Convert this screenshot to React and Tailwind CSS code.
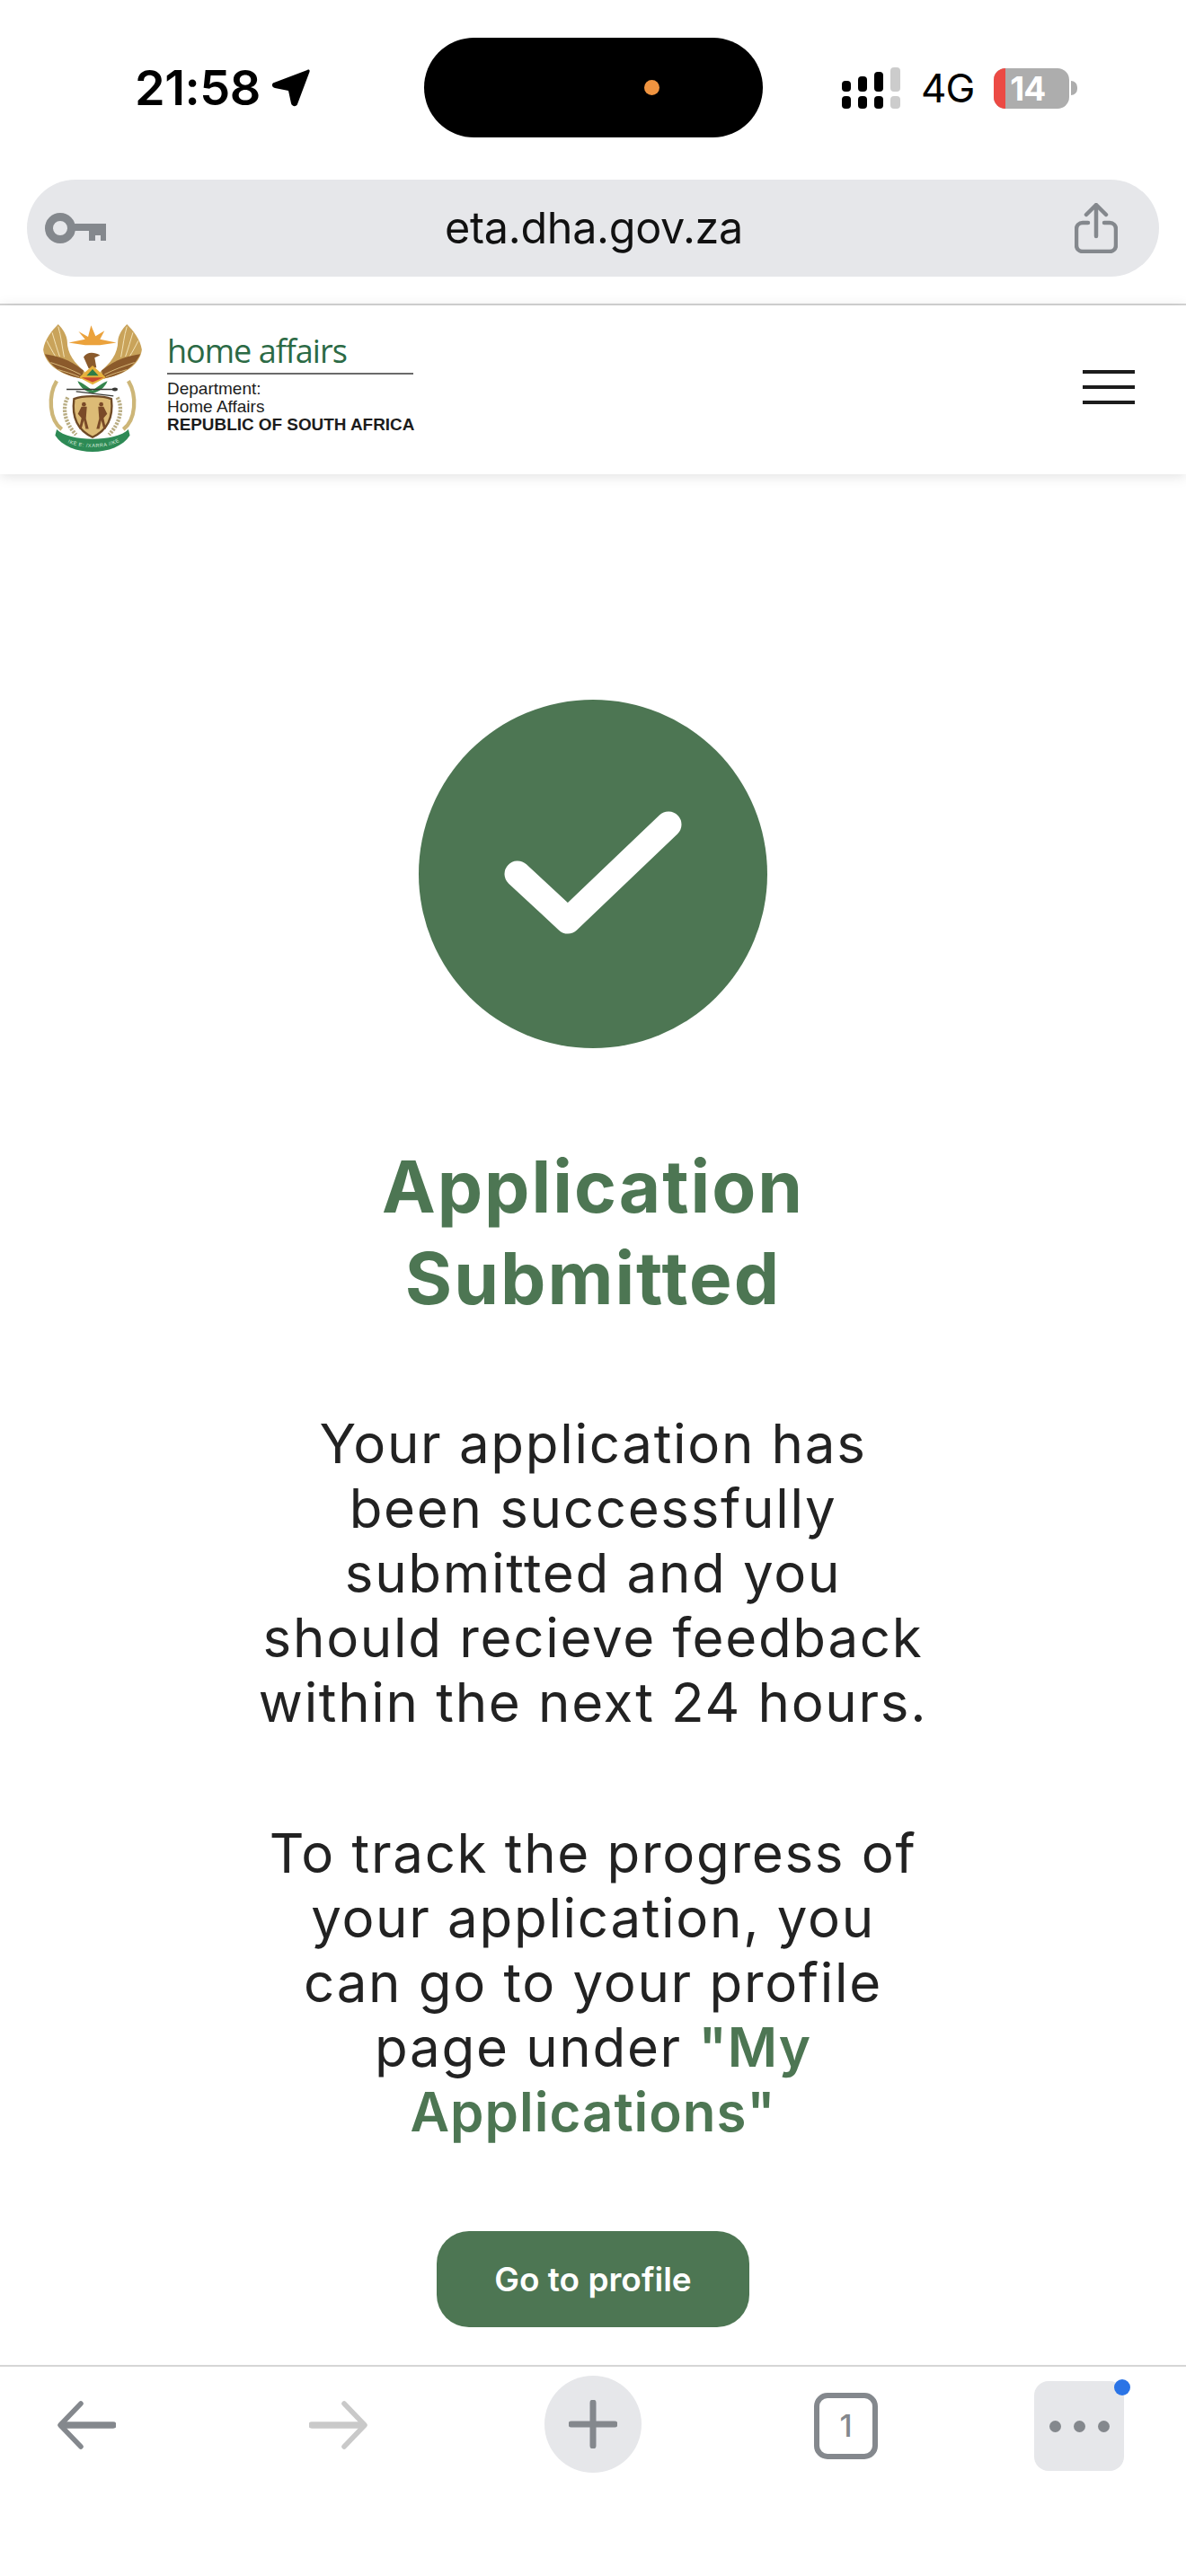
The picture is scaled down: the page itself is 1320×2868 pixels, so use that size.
import React from "react";

const Crest = () => (
  <svg viewBox="0 0 330 430" className="w-[110px] h-[143px] shrink-0">
    <g id="sun" fill="#eba23c">
      <path d="M85 62 L140 50 L118 24 L150 42 L160 4 L175 40 L205 22 L190 50 L245 62 L190 70 L140 70 Z" />
    </g>
    {[1, -1].map((s) => (
      <g key={s} transform={s === 1 ? undefined : "translate(330 0) scale(-1 1)"}>
        <path d="M50 0 C30 20 5 50 0 85 C5 125 40 165 125 182 L140 160 C105 130 80 100 80 55 C78 35 65 15 50 0 Z" fill="#c9a35a" />
        <path d="M5 100 C40 105 85 115 135 155 L128 182 C75 172 30 150 5 100 Z" fill="#8b5a2b" />
        <path d="M50 8 C60 40 62 70 70 110 M30 28 C38 55 45 80 55 108 M12 55 C22 75 30 90 40 106" stroke="#f3e3b8" strokeWidth="3" fill="none" />
        <path d="M25 128 C60 140 90 150 125 168 M50 152 C75 160 95 165 120 176" stroke="#d8b878" strokeWidth="3" fill="none" />
        <path d="M45 190 C15 240 20 320 62 352" stroke="#cdb678" strokeWidth="13" fill="none" />
        <path d="M82 245 C62 280 72 330 110 370" stroke="#b8ac82" strokeWidth="13" strokeDasharray="7 4" fill="none" />
      </g>
    ))}
    <path d="M135 110 C145 92 170 92 190 104 L172 112 L178 145 L152 148 Z" fill="#8a5a2c" />
    <path d="M165 138 L210 178 L165 202 L120 178 Z" fill="#e7b23c" />
    <path d="M165 150 L185 172 L145 172 Z" fill="#2f7d46" />
    <path d="M128 178 L202 178 L165 194 Z" fill="#c9482e" />
    <path d="M115 190 C130 195 150 210 165 222 C180 210 200 195 215 190 C205 215 185 225 165 232 C145 225 125 215 115 190 Z" fill="#35864d" />
    <path d="M78 218 L245 218" stroke="#3a3a36" strokeWidth="4" />
    <ellipse cx="240" cy="218" rx="9" ry="6" fill="#3a3a36" />
    <path d="M110 225 L235 240" stroke="#3a3a36" strokeWidth="4" />
    <path d="M103 250 C130 238 200 238 228 250 C235 310 215 355 165 378 C115 355 95 310 103 250 Z" fill="#dcbb76" stroke="#6f4a26" strokeWidth="7" />
    <g fill="#7a4a28">
      <circle cx="136" cy="268" r="7" />
      <path d="M128 276 L146 276 L143 316 L152 350 L142 350 L136 322 L128 350 L120 350 L128 314 L116 300 Z" />
      <circle cx="194" cy="268" r="7" />
      <path d="M184 276 L202 276 L214 300 L202 314 L210 350 L202 350 L194 322 L188 350 L178 350 L187 316 Z" />
    </g>
    <path id="ribbon" d="M45 352 C85 395 245 395 285 352 L290 372 C245 445 85 445 40 372 Z" fill="#2d8a55" />
    <path id="motto" d="M68 388 C110 420 220 420 262 388" fill="none" />
    <text fontFamily="Liberation Sans, sans-serif" fontSize="17" fill="#d8eadd" letterSpacing="1.5">
      <textPath href="#motto" startOffset="8%">!KE E: /XARRA //KE</textPath>
    </text>
  </svg>
);

const Arrow = ({ color, flip }) => (
  <svg viewBox="0 0 66 54" className={`w-[66px] h-[54px] ${flip ? "-scale-x-100" : ""}`} fill="none" stroke={color} strokeLinecap="round" strokeLinejoin="round">
    <path d="M27 3 L4 27 L27 51" strokeWidth="5.500" />
    <path d="M6 27 L63 27" strokeWidth="7.500" />
  </svg>
);

const Signal = () => (
  <svg viewBox="0 0 66 46" className="w-[66px] h-[46px]">
    <g fill="#000">
      <rect x="0" y="32" width="10" height="14" rx="4" />
      <rect x="18" y="32" width="10" height="14" rx="4" />
      <rect x="36" y="32" width="10" height="14" rx="4" />
      <rect x="0" y="15" width="10" height="12" rx="4" />
      <rect x="18" y="10" width="10" height="17" rx="4" />
      <rect x="36" y="5" width="10" height="22" rx="4" />
    </g>
    <g fill="#cccccc">
      <rect x="54" y="32" width="11" height="14" rx="4" />
      <rect x="54" y="0" width="11" height="27" rx="4" />
    </g>
  </svg>
);

export default function App() {
  return (
    <div className="w-[1320px] h-[2868px] bg-white flex flex-col overflow-hidden text-[#1f1f1f] font-['Inter',sans-serif]">
      {/* status bar */}
      <div className="h-[200px] shrink-0 flex items-start">
        <div className="w-[472px] pl-[150px] pt-[65px] flex items-center gap-[13px]">
          <span className="text-[54px] leading-[66px] font-semibold text-black tracking-[-0.5px]">21:58</span>
          <svg viewBox="0 0 42 42" className="w-[42px] h-[42px]">
            <path d="M39 1 C41 0 42 1 41.500 3 L28 39 C27 42 22 42 21 38 L18 24 L3 21 C-1 20 -1 16 2 15 Z" fill="#000" />
          </svg>
        </div>
        <div className="mt-[42px] w-[377px] h-[111px] rounded-full bg-black flex items-center justify-end pr-[115px]">
          <div className="w-[17px] h-[17px] rounded-full bg-[#f09440]" />
        </div>
        <div className="ml-[88px] mt-[75px] flex items-center">
          <Signal />
          <span className="ml-[22px] text-[44px] leading-[46px] font-normal text-black tracking-[-1px]">4G</span>
          <div className="ml-[22px] w-[84px] h-[45px] rounded-[13px] bg-[#adadad] flex items-center">
            <div className="w-[13px] h-full bg-[#ec4a44] rounded-l-[13px]" />
            <span className="ml-[5px] w-[50px] text-[37px] leading-[45px] font-bold text-white tracking-[-1px]">14</span>
          </div>
          <div className="ml-[2px] w-[7px] h-[16px] rounded-r-full bg-[#adadad]" />
        </div>
      </div>

      {/* url bar */}
      <div className="h-[140px] shrink-0 px-[30px] border-b-2 border-[#d6d6d6]">
        <div className="h-[108px] rounded-full bg-[#e6e7ea] flex items-center justify-between pl-[20px] pr-[46px]">
          <svg viewBox="0 0 68 34" className="w-[68px] h-[34px]">
            <circle cx="17" cy="17" r="12.500" fill="none" stroke="#84888d" strokeWidth="9" />
            <path d="M30 12 H68 V31 H62 V25 H56 V31 H49 V20 H30 Z" fill="#84888d" />
          </svg>
          <span className="ml-[8px] text-[48.500px] leading-[56px] text-[#111] tracking-[-0.3px]">eta.dha.gov.za</span>
          <svg viewBox="0 0 48 56" className="w-[48px] h-[56px]" fill="none" stroke="#84888d" strokeLinecap="round" strokeLinejoin="round">
            <path d="M15 22 H9 C5 22 2 25 2 29 V47 C2 51 5 54 9 54 H39 C43 54 46 51 46 47 V29 C46 25 43 22 39 22 H33" strokeWidth="4.500" />
            <path d="M24 37 V3 M13 13 L24 2 L35 13" strokeWidth="4.500" />
          </svg>
        </div>
      </div>

      {/* site navbar */}
      <header className="h-[188px] shrink-0 bg-white flex items-center justify-between pl-[48px] pr-[57px] shadow-[0_2px_14px_rgba(0,0,0,0.12)] relative">
        <div className="flex items-center gap-[28px] -mt-[4px]">
          <Crest />
          <div className="w-[274px] flex flex-col -mt-[14px]">
            <span className="text-[36px] leading-[48px] text-[#2b6a45] font-['Open_Sans',sans-serif] tracking-[-1px]">home affairs</span>
            <div className="h-[2px] bg-[#6a6a6a] mb-[6px]" />
            <div className="font-['Liberation_Sans',sans-serif] text-[#1c1c1c] text-[19px] leading-[20px]">
              <div>Department:</div>
              <div>Home Affairs</div>
              <div className="font-bold text-[18.900px] whitespace-nowrap">REPUBLIC OF SOUTH AFRICA</div>
            </div>
          </div>
        </div>
        <div className="flex flex-col gap-[13px] -mt-[6px]">
          <div className="w-[58px] h-[4px] bg-[#1c1c1c]" />
          <div className="w-[58px] h-[4px] bg-[#1c1c1c]" />
          <div className="w-[58px] h-[4px] bg-[#1c1c1c]" />
        </div>
      </header>

      {/* main content */}
      <main className="h-[2105px] shrink-0 flex flex-col items-center pt-[251px] text-center">
        <div className="w-[388px] h-[388px] rounded-full bg-[#4d7653] flex items-center justify-center shrink-0">
          <svg viewBox="0 0 388 388" className="w-[388px] h-[388px]" fill="none" stroke="#fff" strokeWidth="29" strokeLinecap="round" strokeLinejoin="round">
            <path d="M110 194 L166 246 L278 139" />
          </svg>
        </div>
        <h1 className="mt-[103px] text-[80px] leading-[102px] font-bold text-[#4d7653] tracking-[2px]">
          <span className="block">Application</span>
          <span className="block">Submitted</span>
        </h1>
        <div className="mt-[97px] text-[60px] leading-[72px] font-normal text-[#222] tracking-[1.700px]">
          <p>
            <span className="block">Your application has</span>
            <span className="block">been successfully</span>
            <span className="block">submitted and you</span>
            <span className="block">should recieve feedback</span>
            <span className="block">within the next 24 hours.</span>
          </p>
          <p className="mt-[96px]">
            <span className="block">To track the progress of</span>
            <span className="block">your application, you</span>
            <span className="block">can go to your profile</span>
            <span className="block">page under <strong className="font-semibold text-[#4d7653] tracking-[1px]">"My</strong></span>
            <strong className="block font-semibold text-[#4d7653] tracking-[1px]">Applications"</strong>
          </p>
        </div>
        <button className="mt-[97px] w-[348px] h-[107px] rounded-[36px] bg-[#4d7653] text-white text-[37px] font-semibold">Go to profile</button>
      </main>

      {/* browser toolbar */}
      <nav className="flex-1 border-t-2 border-[#d6d6d6] flex items-start pl-[63px] pt-[10px]">
        <div className="mt-[28px]"><Arrow color="#84888d" /></div>
        <div className="mt-[28px] ml-[215px]"><Arrow color="#c9c9c9" flip /></div>
        <div className="ml-[196px] w-[108px] h-[108px] rounded-full bg-[#e6e7ea] flex items-center justify-center">
          <svg viewBox="0 0 54 54" className="w-[54px] h-[54px]" stroke="#84888d" strokeLinecap="round">
            <path d="M3 27 H51" strokeWidth="7" />
            <path d="M27 3 V51" strokeWidth="7" />
          </svg>
        </div>
        <div className="ml-[192px] mt-[19px] w-[71px] h-[74px] rounded-[15px] border-[6px] border-[#84888d] flex items-center justify-center text-[34px] leading-none font-medium text-[#84888d]">1</div>
        <div className="ml-[174px] relative mt-[6px] w-[100px] h-[100px] rounded-[16px] bg-[#e6e7ea] flex items-center justify-center gap-[14px]">
          <div className="w-[13px] h-[13px] rounded-full bg-[#84888d]" />
          <div className="w-[13px] h-[13px] rounded-full bg-[#84888d]" />
          <div className="w-[13px] h-[13px] rounded-full bg-[#84888d]" />
          <div className="absolute -top-[2px] -right-[7px] w-[18px] h-[18px] rounded-full bg-[#2b74e6]" />
        </div>
      </nav>
    </div>
  );
}
